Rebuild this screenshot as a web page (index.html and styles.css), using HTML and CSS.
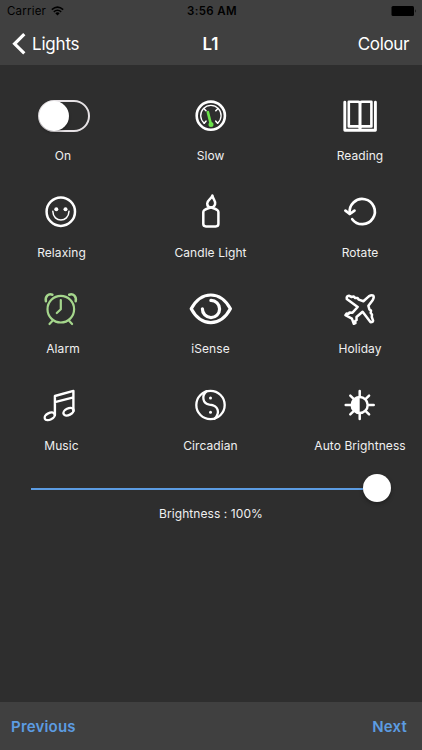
FILE: index.html
```html
<!DOCTYPE html>
<html lang="en">
<head>
    <meta charset="UTF-8">
    <meta name="viewport" content="width=device-width, initial-scale=1.0">
    <title>L1</title>
    <link rel="stylesheet" href="styles.css">
</head>
<body>

    <header class="header">
        <div class="status">
            <div class="status-left">
                <span class="carrier">Carrier</span>
                <svg class="wifi" width="13" height="10" viewBox="0 0 13 10">
                    <path d="M0.8 3.6 Q6.5 -1.4 12.2 3.6 M2.8 5.9 Q6.5 2.7 10.2 5.9" fill="none" stroke="#000" stroke-width="1.5"/>
                    <path d="M4.3 7.3 Q6.5 5.4 8.7 7.3 L6.5 9.6 Z" fill="#000"/>
                </svg>
            </div>
            <span class="time">3:56 AM</span>
            <div class="status-right">
                <svg width="26" height="10" viewBox="0 0 26 10">
                    <rect x="0.5" y="0" width="22.5" height="10" rx="1.5"/>
                    <path d="M24 3.2 Q25.4 5 24 6.8 Z"/>
                </svg>
            </div>
        </div>
        <nav class="navbar">
            <a class="back">
                <svg width="14" height="22" viewBox="0 0 14 22"><path d="M12.3 1.2 L2.6 10.8 L12.3 20.4" fill="none" stroke="#fff" stroke-width="3.2"/></svg>
                <span class="back-text">Lights</span>
            </a>
            <h1 class="title">L1</h1>
            <a class="colour">Colour</a>
        </nav>
    </header>

    <main class="content">
        <div class="modes">
            <div class="mode">
                <div class="icon"><div class="switch"><div class="knob"></div></div></div>
                <span class="label label-on">On</span>
            </div>
            <div class="mode">
                <div class="icon">
                    <svg viewBox="0 0 44 44" stroke-width="2.6">
                        <circle cx="21.8" cy="21.7" r="14.1"/>
                        <path d="M15.2 29.2 A10.2 10.2 0 1 1 28.6 29.2" stroke-width="1.3"/>
                        <path d="M15.2 29.2 l1.8 -2 M28.6 29.2 l-1.8 -2 M14.8 14.5 l2.2 2.2 M29 14.5 l-2.2 2.2" stroke-width="1.6"/>
                        <path class="needle" d="M18.9 18.2 L21.9 30.3" stroke-width="2.7"/>
                        <circle class="needle" cx="22" cy="30.5" r="1.5" stroke-width="2"/>
                    </svg>
                </div>
                <span class="label">Slow</span>
            </div>
            <div class="mode">
                <div class="icon">
                    <svg viewBox="0 0 44 44" stroke-width="2.6">
                        <path d="M6.8 8.2 V36.2 H37.4 V8.2" stroke-width="2.9"/>
                        <path d="M10.8 7.8 H20.2 Q22 7.8 22 9 Q22 7.8 23.8 7.8 H33.4 V32.4 H23.8 Q22 32.4 22 34 Q22 32.4 20.2 32.4 H10.8 Z"/>
                        <path d="M22 9 V35" stroke-width="3"/>
                    </svg>
                </div>
                <span class="label">Reading</span>
            </div>

            <div class="mode">
                <div class="icon">
                    <svg viewBox="0 0 44 44" stroke-width="2.5">
                        <circle cx="20.8" cy="21.7" r="14.2"/>
                        <circle class="fill" cx="16.3" cy="19.3" r="2"/>
                        <circle class="fill" cx="25.5" cy="19.3" r="2"/>
                        <path d="M12.8 21.3 C13.2 33 28.6 33 29 21.3" stroke-width="1.5"/>
                    </svg>
                </div>
                <span class="label">Relaxing</span>
            </div>
            <div class="mode">
                <div class="icon">
                    <svg viewBox="0 0 44 44" stroke-width="2.5">
                        <path d="M23.4 5.4 C23.6 9 27 10.8 26.1 14.2 C25.5 16.3 23.8 17.4 21.8 17.4 C19.6 17.4 18.2 15.8 18.2 13.6 C18.2 9.9 22.8 8.8 23.4 5.4 Z"/>
                        <path d="M22 17.4 C20 18.2 14.3 18.8 14.3 22 V34 Q14.3 36.3 17 36.4 H26.7 Q29.4 36.3 29.4 34 V22 C29.4 18.8 24 18.2 22 17.4 Z"/>
                    </svg>
                </div>
                <span class="label">Candle Light</span>
            </div>
            <div class="mode">
                <div class="icon">
                    <svg viewBox="0 0 44 44" stroke-width="2.7">
                        <path d="M14.2 29.2 A12.6 12.6 0 1 0 11.8 23.6"/>
                        <path d="M7.4 20.6 L11.8 24 L16.5 20.6"/>
                    </svg>
                </div>
                <span class="label">Rotate</span>
            </div>

            <div class="mode">
                <div class="icon">
                    <svg class="green" viewBox="0 0 44 44" stroke-width="2.2">
                        <circle cx="20.8" cy="22.2" r="13.3"/>
                        <path d="M20.8 13 V22.2 L16.8 26 M12.3 34 L9.5 37 M29.3 34 L32.1 37"/>
                        <path d="M5.9 14.3 C4.9 9.6 8.2 6.3 12.4 7.7 M35.7 14.3 C36.7 9.6 33.4 6.3 29.2 7.7" stroke-width="2.5"/>
                    </svg>
                </div>
                <span class="label label-alarm">Alarm</span>
            </div>
            <div class="mode">
                <div class="icon">
                    <svg viewBox="0 0 44 44" stroke-width="3.2">
                        <path d="M2.2 21.8 C12.2 3.4 31.4 3.4 41.4 21.8 C31.4 40.2 12.2 40.2 2.2 21.8 Z"/>
                        <path d="M21.9 13.4 A8.6 8.6 0 1 1 13.4 21.8"/>
                    </svg>
                </div>
                <span class="label">iSense</span>
            </div>
            <div class="mode">
                <div class="icon">
                    <svg viewBox="0 0 44 44" stroke-width="2.5">
                        <path d="M25.4 14.2 L30.8 9.4 Q33.6 7.6 35.2 8.6 Q36.5 10.3 34.6 13.2 L30.4 18.8 L31.4 22.4 L33 23.6 L32.7 26 L34 27.5 L33.8 30 L35.1 33.6 Q35.1 35.3 32.6 35.3 L24.6 24.8 L18.5 30 L18.6 33 L17.3 33.8 L17.4 36.2 L15.8 36.8 L13.9 31.6 L7.4 28.2 L8.6 26.6 L10.8 26.8 L11.5 25.4 L14.5 25.7 L19.7 20 L8.8 12 Q8.2 8.8 10.8 8.7 L13.6 10 L15.6 9.4 L17.2 11 L19.4 10.9 L20.8 12.6 Z"/>
                    </svg>
                </div>
                <span class="label">Holiday</span>
            </div>

            <div class="mode">
                <div class="icon">
                    <svg viewBox="0 0 44 44" stroke-width="2.4">
                        <path d="M14.9 32 V13 L33.4 7.9 V28 M14.9 19.2 L33.4 14.3"/>
                        <ellipse cx="9.7" cy="33.3" rx="5.4" ry="3.3" transform="rotate(-26 9.7 33.3)"/>
                        <ellipse cx="28.5" cy="28.7" rx="5.4" ry="3.3" transform="rotate(-26 28.5 28.7)"/>
                    </svg>
                </div>
                <span class="label">Music</span>
            </div>
            <div class="mode">
                <div class="icon">
                    <svg viewBox="0 0 44 44" stroke-width="2.3">
                        <circle cx="21.5" cy="22" r="14.2"/>
                        <path d="M17.6 8.2 C12.4 13 13.5 20.3 20.4 21.6 C29.4 22.4 31.5 29.5 25.6 35.8"/>
                        <circle class="fill" cx="21.5" cy="15" r="1.5"/>
                        <circle class="fill" cx="21.5" cy="29.3" r="1.5"/>
                    </svg>
                </div>
                <span class="label">Circadian</span>
            </div>
            <div class="mode">
                <div class="icon">
                    <svg viewBox="0 0 44 44" stroke-width="2.5">
                        <circle cx="21.7" cy="22" r="8"/>
                        <path class="fill" d="M21.7 13.5 A8.5 8.5 0 0 0 21.7 30.5 Z"/>
                        <path d="M21.7 8 V13 M21.7 31 V36 M7.7 22 H12.7 M30.7 22 H35.7 M12.3 12.6 L15.4 15.7 M28 28.3 L31.1 31.4 M12.3 31.4 L15.4 28.3 M28 15.7 L31.1 12.6"/>
                    </svg>
                </div>
                <span class="label">Auto Brightness</span>
            </div>
        </div>

        <div class="slider">
            <div class="track"></div>
            <div class="thumb"></div>
        </div>
        <p class="brightness">Brightness : 100%</p>
    </main>

    <footer class="footer">
        <a class="page-link">Previous</a>
        <a class="page-link">Next</a>
    </footer>

</body>
</html>
```
FILE: styles.css
```css
* {
    margin: 0;
    padding: 0;
    box-sizing: border-box;
}
body {
    background-color: #2e2e2e;
    color: white;
    font-family: Inter, "Liberation Sans", sans-serif;
    display: flex;
    flex-direction: column;
    height: 750px;
    overflow: hidden;
}
.header {
    height: 65px;
    background-color: #404040;
}
.status {
    height: 22px;
    display: grid;
    grid-template-columns: 1fr auto 1fr;
    align-items: center;
    padding: 0 5px 0 7px;
    color: black;
    font-size: 11.5px;
}
.status-left {
    display: flex;
    align-items: center;
    gap: 5px;
}
.carrier {
    letter-spacing: 0.2px;
}
.time {
    font-weight: 600;
    letter-spacing: 0.35px;
}
.status-right {
    display: flex;
    justify-content: flex-end;
}
.navbar {
    height: 43px;
    display: grid;
    grid-template-columns: 1fr auto 1fr;
    align-items: center;
    padding: 0 13px 0 12px;
    font-size: 17px;
    letter-spacing: -0.2px;
}
.back {
    display: flex;
    align-items: center;
    gap: 6px;
}
.title {
    font-size: 17px;
    font-weight: 600;
    letter-spacing: 0;
}
.colour {
    text-align: right;
    letter-spacing: -0.35px;
}
.content {
    flex: 1;
    padding-top: 18px;
}
.modes {
    display: grid;
    grid-template-columns: 123px 175px 124px;
    grid-auto-rows: 96.5px;
}
.mode {
    display: flex;
    flex-direction: column;
    align-items: center;
}
.icon {
    height: 65px;
    display: flex;
    align-items: center;
}
.icon svg {
    width: 44px;
    height: 44px;
    fill: none;
    stroke: white;
    stroke-linecap: round;
    stroke-linejoin: round;
}
.icon .fill {
    fill: white;
    stroke: none;
}
.icon .green {
    stroke: #a5d68c;
}
.icon .needle {
    stroke: #6be34a;
}
.switch {
    width: 52px;
    height: 32px;
    margin-left: 5px;
    border: 2px solid #e6e2e5;
    border-radius: 16px;
}
.knob {
    width: 30px;
    height: 30px;
    margin: -1px 0 0 -1px;
    border-radius: 50%;
    background-color: white;
    box-shadow: 0 2px 3px rgba(0, 0, 0, 0.25);
}
.label {
    font-size: 12px;
    line-height: 16px;
    letter-spacing: 0.07px;
    color: #f0f0f0;
    white-space: nowrap;
}
.label-on, .label-alarm {
    margin-left: 3px;
}
.slider {
    height: 28px;
    margin: 5px 31px 0;
    display: flex;
    align-items: center;
}
.track {
    flex: 1;
    height: 2px;
    margin-top: 2px;
    background-color: #5c9ce2;
}
.thumb {
    width: 28px;
    height: 28px;
    border-radius: 50%;
    background-color: white;
    box-shadow: 0 2px 4px rgba(0, 0, 0, 0.3);
}
.brightness {
    margin-top: 4px;
    text-align: center;
    font-size: 12px;
    line-height: 16px;
    letter-spacing: 0.07px;
    color: #f0f0f0;
}
.footer {
    height: 48px;
    display: flex;
    align-items: center;
    justify-content: space-between;
    padding: 0 15px 0 11px;
    background-color: #404040;
}
.page-link {
    font-size: 15px;
    font-weight: 600;
    letter-spacing: 0.2px;
    color: #5c9ce2;
}
```
